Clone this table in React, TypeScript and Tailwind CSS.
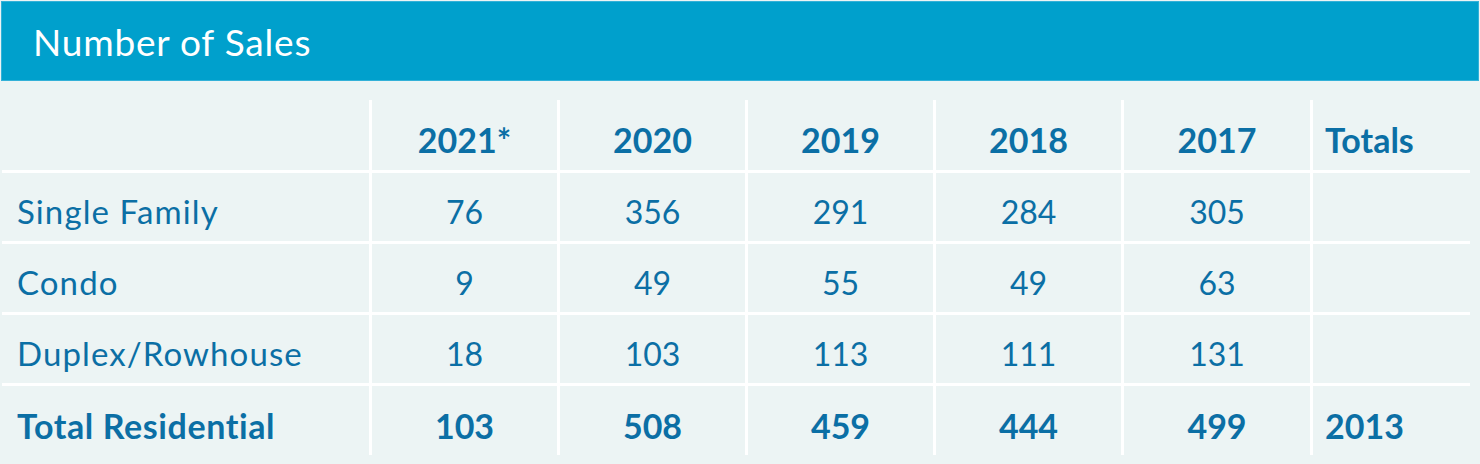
import React from "react";

const cols = ["2021*", "2020", "2019", "2018", "2017"];
const rows: { label: string; values: string[] }[] = [
  { label: "Single Family", values: ["76", "356", "291", "284", "305"] },
  { label: "Condo", values: ["9", "49", "55", "49", "63"] },
  { label: "Duplex/Rowhouse", values: ["18", "103", "113", "111", "131"] },
];

export default function App() {
  const font = { fontFamily: "Lato, 'Noto Sans', sans-serif" };
  return (
    <div className="w-[1480px] h-[464px] bg-[#ecf4f4] text-[#0b6fa5] overflow-hidden" style={font}>
      <div className="ml-[1px] mt-[1px] w-[1478px] h-[80px] bg-[#00a0cc] border border-[#33b1d8] flex items-center pl-[31px]">
        <h1 className="text-white text-[37px] leading-none font-normal tracking-[0.8px]">Number of Sales</h1>
      </div>
      <div className="pl-[2px] pt-[19px]">
        <div className="grid grid-cols-[367px_188px_188px_188px_188px_189px_160px]">
          <div className="h-[73px] border-b-[3px] border-white" />
          {cols.map((c) => (
            <div
              key={c}
              className="h-[73px] border-b-[3px] border-l-[3px] border-white flex items-center justify-center pt-[9px] text-[34px] font-bold"
            >
              {c}
            </div>
          ))}
          <div className="h-[73px] border-b-[3px] border-l-[3px] border-white flex items-center pl-[12px] pt-[9px] text-[34px] font-bold">
            Totals
          </div>
          {rows.map((r) => (
            <React.Fragment key={r.label}>
              <div className="h-[71px] border-b-[3px] border-white flex items-center pl-[15px] pt-[9px] text-[33px] tracking-[1.1px]">
                {r.label}
              </div>
              {r.values.map((v, i) => (
                <div
                  key={i}
                  className="h-[71px] border-b-[3px] border-l-[3px] border-white flex items-center justify-center pt-[9px] text-[32px]"
                >
                  {v}
                </div>
              ))}
              <div className="h-[71px] border-b-[3px] border-l-[3px] border-white" />
            </React.Fragment>
          ))}
          <div className="h-[69px] flex items-center pl-[15px] pt-[10px] text-[34px] font-bold tracking-[0.6px]">
            Total Residential
          </div>
          {["103", "508", "459", "444", "499"].map((v, i) => (
            <div
              key={i}
              className="h-[69px] border-l-[3px] border-white flex items-center justify-center pt-[10px] text-[34px] font-bold"
            >
              {v}
            </div>
          ))}
          <div className="h-[69px] border-l-[3px] border-white flex items-center pl-[12px] pt-[10px] text-[34px] font-bold">
            2013
          </div>
        </div>
      </div>
    </div>
  );
}
